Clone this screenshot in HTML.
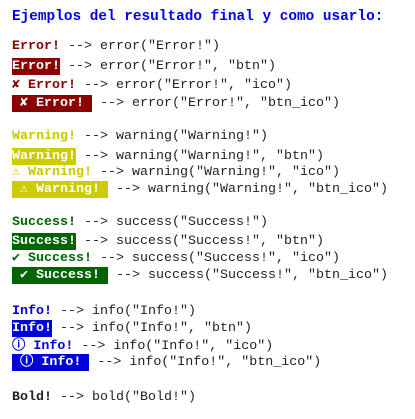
<!DOCTYPE html>
<html><head><meta charset="utf-8"><style>
body{margin:0;width:415px;height:419px;background:#fff;position:relative;overflow:hidden;font-family:"Liberation Mono","DejaVu Sans Mono",monospace;font-size:13.33px;color:#222;}
.l{position:absolute;left:12px;white-space:pre;line-height:16px;}
.t{font-size:14.4px;font-weight:bold;color:#0000ee;}
.e{color:#8b0000;font-weight:bold}.w{color:#c8c800;font-weight:bold}.s{color:#006400;font-weight:bold}.i{color:#0000dd;font-weight:bold}.b{font-weight:bold}
.be,.bw,.bs,.bi{color:#fff;font-weight:bold;display:inline-block;line-height:17px}
.be{background:#8b0000}.bw{background:#cccc00}.bs{background:#006400}.bi{background:#0000dd}
</style></head><body>
<div class="l t" style="top:9px">Ejemplos del resultado final y como usarlo:</div>

<div class="l" style="top:39px"><span class="e">Error!</span> --&gt; error("Error!")</div>
<div class="l" style="top:58px"><span class="be">Error!</span> --&gt; error("Error!", "btn")</div>
<div class="l" style="top:78px"><span class="e">✘ Error!</span> --&gt; error("Error!", "ico")</div>
<div class="l" style="top:95px"><span class="be"> ✘ Error! </span> --&gt; error("Error!", "btn_ico")</div>

<div class="l" style="top:129px"><span class="w">Warning!</span> --&gt; warning("Warning!")</div>
<div class="l" style="top:148px"><span class="bw">Warning!</span> --&gt; warning("Warning!", "btn")</div>
<div class="l" style="top:165px"><span class="w">⚠ Warning!</span> --&gt; warning("Warning!", "ico")</div>
<div class="l" style="top:181px"><span class="bw"> ⚠ Warning! </span> --&gt; warning("Warning!", "btn_ico")</div>

<div class="l" style="top:215px"><span class="s">Success!</span> --&gt; success("Success!")</div>
<div class="l" style="top:233px"><span class="bs">Success!</span> --&gt; success("Success!", "btn")</div>
<div class="l" style="top:251px"><span class="s">✔ Success!</span> --&gt; success("Success!", "ico")</div>
<div class="l" style="top:267px"><span class="bs"> ✔ Success! </span> --&gt; success("Success!", "btn_ico")</div>

<div class="l" style="top:304px"><span class="i">Info!</span> --&gt; info("Info!")</div>
<div class="l" style="top:320px"><span class="bi">Info!</span> --&gt; info("Info!", "btn")</div>
<div class="l" style="top:339px"><span class="i">ⓘ Info!</span> --&gt; info("Info!", "ico")</div>
<div class="l" style="top:354px"><span class="bi"> ⓘ Info! </span> --&gt; info("Info!", "btn_ico")</div>

<div class="l" style="top:390px"><span class="b">Bold!</span> --&gt; bold("Bold!")</div>
</body></html>
